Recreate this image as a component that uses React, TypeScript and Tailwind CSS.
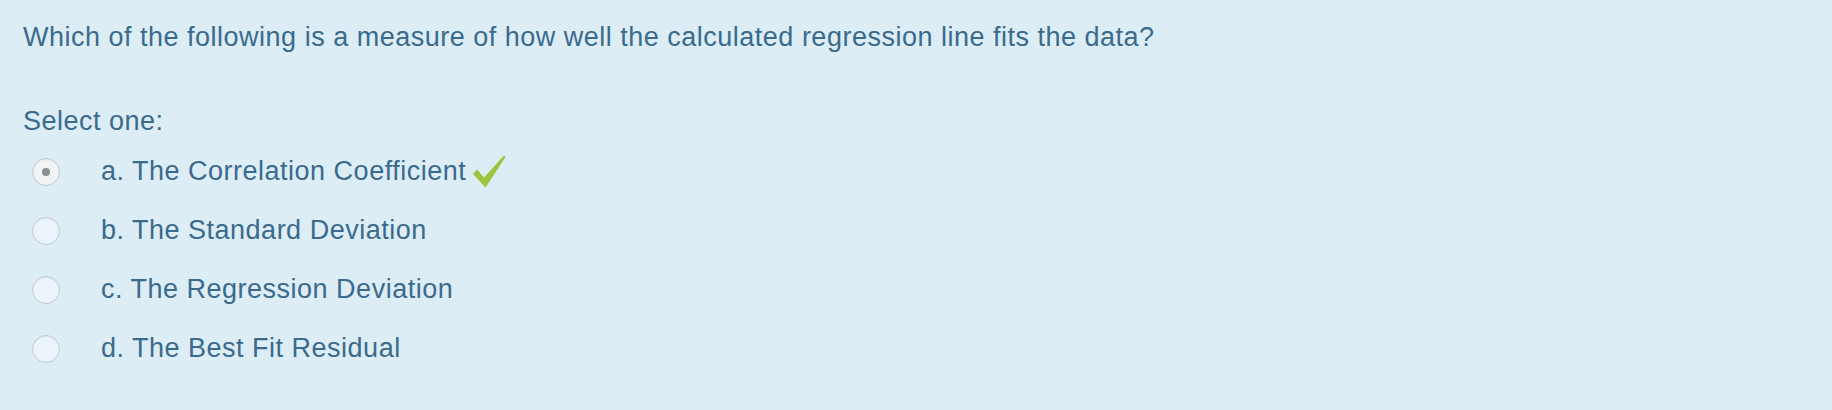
import React from 'react';

const options = [
  { key: 'a', label: 'a. The Correlation Coefficient', checked: true, correct: true },
  { key: 'b', label: 'b. The Standard Deviation', checked: false, correct: false },
  { key: 'c', label: 'c. The Regression Deviation', checked: false, correct: false },
  { key: 'd', label: 'd. The Best Fit Residual', checked: false, correct: false },
];

function Radio({ checked }: { checked: boolean }) {
  return (
    <span
      className={`grid h-[28px] w-[28px] shrink-0 place-items-center rounded-full border border-[#c3c9cf] shadow-[inset_0_1px_2px_rgba(0,0,0,0.06)] ${
        checked ? 'bg-[#f1f3f5]' : 'bg-[#ebf3fb]'
      }`}
    >
      {checked && <span className="h-[8px] w-[8px] rounded-full bg-[#8a8f95]" />}
    </span>
  );
}

function CheckMark() {
  return (
    <svg width="36" height="36" viewBox="0 0 36 36" className="ml-[5px] shrink-0">
      <polygon points="2,20 6,15.5 13,23.5 33,1.5 34.5,3 14.5,33.5" fill="#9bc53d" />
    </svg>
  );
}

export default function App() {
  return (
    <div
      className="min-h-screen w-full bg-[#dcedf5] pl-[23px] pt-[18px] text-[27px] leading-[39px] tracking-[0.5px] text-[#3a6a8c]"
      style={{ fontFamily: '"Liberation Sans", Arial, Helvetica, sans-serif' }}
    >
      <p>Which of the following is a measure of how well the calculated regression line fits the data?</p>
      <p className="mt-[45px]">Select one:</p>
      <div className="mt-[1px]">
        {options.map((opt) => (
          <div key={opt.key} className="flex h-[59px] items-center">
            <span className="ml-[9px]">
              <Radio checked={opt.checked} />
            </span>
            <span className="ml-[41px]">{opt.label}</span>
            {opt.correct && <CheckMark />}
          </div>
        ))}
      </div>
    </div>
  );
}
